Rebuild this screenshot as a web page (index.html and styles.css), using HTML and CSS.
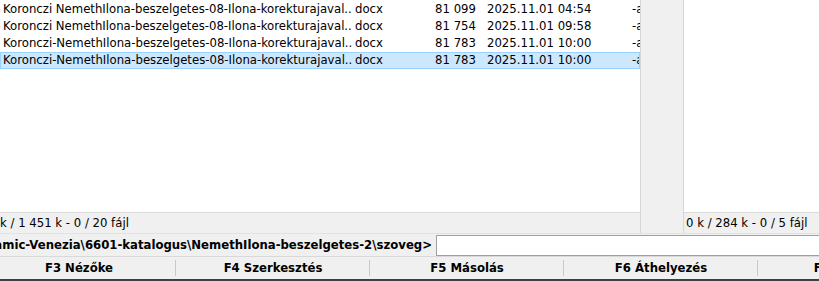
FILE: index.html
```html
<!DOCTYPE html>
<html>
<head>
  <title>Total Commander</title>
  <link rel="stylesheet" href="styles.css">
</head>
<body>
<div class="window">
  <div class="panels">
    <div class="panel panel-left">
      <div class="file-list">
        <div class="row">
          <span class="col-name">Koronczi NemethIlona-beszelgetes-08-Ilona-korekturajaval..</span>
          <span class="col-ext">docx</span>
          <span class="col-size">81 099</span>
          <span class="col-date">2025.11.01 04:54</span>
          <span class="col-attr">-a--</span>
        </div>
        <div class="row">
          <span class="col-name">Koronczi NemethIlona-beszelgetes-08-Ilona-korekturajaval..</span>
          <span class="col-ext">docx</span>
          <span class="col-size">81 754</span>
          <span class="col-date">2025.11.01 09:58</span>
          <span class="col-attr">-a--</span>
        </div>
        <div class="row">
          <span class="col-name">Koronczi-NemethIlona-beszelgetes-08-Ilona-korekturajaval..</span>
          <span class="col-ext">docx</span>
          <span class="col-size">81 783</span>
          <span class="col-date">2025.11.01 10:00</span>
          <span class="col-attr">-a--</span>
        </div>
        <div class="row selected">
          <span class="col-name">Koronczi-NemethIlona-beszelgetes-08-Ilona-korekturajaval..</span>
          <span class="col-ext">docx</span>
          <span class="col-size">81 783</span>
          <span class="col-date">2025.11.01 10:00</span>
          <span class="col-attr">-a--</span>
        </div>
      </div>
      <div class="status">k / 1 451 k - 0 / 20 fájl</div>
    </div>
    <div class="splitter"></div>
    <div class="panel panel-right">
      <div class="file-list"></div>
      <div class="status">0 k / 284 k - 0 / 5 fájl</div>
    </div>
  </div>

  <div class="cmdline">
    <div class="cmd-path"><span>D:\Munka\Dinamic-Venezia\6601-katalogus\NemethIlona-beszelgetes-2\szoveg&gt;</span></div>
    <input class="cmd-input" type="text">
  </div>

  <div class="fkeys">
    <div class="fkey">F3 Nézőke</div>
    <div class="fkey">F4 Szerkesztés</div>
    <div class="fkey">F5 Másolás</div>
    <div class="fkey">F6 Áthelyezés</div>
    <div class="fkey">F7 Új mappa</div>
  </div>
</div>
</body>
</html>
```

FILE: styles.css
```css
html, body {
  margin: 0;
  padding: 0;
}

body {
  font-family: "DejaVu Sans", Verdana, sans-serif;
  font-size: 11.7px;
  color: #000;
  background: #f0f0f0;
  overflow: hidden;
}

.window {
  width: 819px;
  height: 281px;
  display: flex;
  flex-direction: column;
  overflow: hidden;
}

/* panels */
.panels {
  display: flex;
  height: 233px;
}

.panel {
  display: flex;
  flex-direction: column;
}

.panel-left {
  width: 640px;
  border-right: 1px solid #d7d7d7;
}

.splitter {
  width: 42px;
  background: #f0f0f0;
}

.panel-right {
  flex: 1;
  border-left: 1px solid #d7d7d7;
}

.file-list {
  flex: 1;
  background: #fff;
  padding-top: 1px;
  overflow: hidden;
}

.row {
  display: flex;
  height: 17px;
  line-height: 17px;
  white-space: nowrap;
  box-sizing: border-box;
  overflow: hidden;
}

.row.selected {
  background: #cce8ff;
  border: 1px solid #99d1ff;
  line-height: 15px;
}

.col-name {
  width: 352px;
  padding-left: 3px;
  flex-shrink: 0;
  overflow: hidden;
}

.row.selected .col-name {
  padding-left: 2px;
}

.col-ext {
  width: 60px;
  flex-shrink: 0;
}

.col-size {
  width: 61px;
  text-align: right;
  flex-shrink: 0;
}

.col-date {
  width: 145px;
  padding-left: 11px;
  flex-shrink: 0;
}

.col-attr {
  flex-shrink: 0;
}

.status {
  height: 20px;
  line-height: 20px;
  border-top: 1px solid #d9d9d9;
  background: #f0f0f0;
  white-space: nowrap;
  overflow: hidden;
}

.panel-right .status {
  padding-left: 2px;
}

/* command line */
.cmdline {
  display: flex;
  align-items: center;
  height: 23px;
  border-top: 1px solid #e3e3e3;
  box-sizing: border-box;
}

.cmd-path {
  width: 432px;
  display: flex;
  justify-content: flex-end;
  overflow: hidden;
  white-space: nowrap;
  font-weight: bold;
}

.cmd-input {
  flex: 1;
  margin-left: 4px;
  height: 21px;
  box-sizing: border-box;
  border: 1px solid #a0a0a0;
  background: #fff;
  padding: 0;
  margin-right: -4px;
}

/* function keys */
.fkeys {
  display: flex;
  height: 25px;
  margin-left: -18px;
  border-top: 1px solid #d9d9d9;
  border-bottom: 2px solid #404040;
  box-sizing: border-box;
}

.fkey {
  width: 194px;
  flex-shrink: 0;
  display: flex;
  align-items: center;
  justify-content: center;
  font-weight: bold;
  position: relative;
}

.fkey + .fkey::before {
  content: "";
  position: absolute;
  left: -1px;
  top: 3px;
  bottom: 3px;
  border-left: 1px solid #c8c8c8;
}
```
